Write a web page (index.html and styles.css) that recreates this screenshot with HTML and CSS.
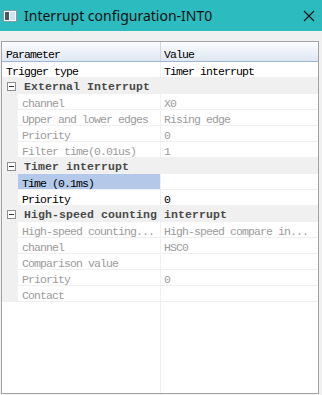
FILE: index.html
```html
<!DOCTYPE html>
<html>
<head>
<meta charset="utf-8">
<title>Interrupt configuration-INT0</title>
<link rel="stylesheet" href="styles.css">
</head>
<body>
<div class="titlebar">
  <svg class="app-icon" width="14" height="12" viewBox="0 0 14 12">
    <rect x="0.5" y="0.5" width="13" height="11" fill="#f4f8fb" stroke="#8c9aa6"/>
    <rect x="2" y="2" width="4" height="8" fill="#4a5560"/>
    <rect x="7" y="2" width="5" height="8" fill="#cfe3f2"/>
  </svg>
  <span class="title">Interrupt configuration-INT0</span>
  <svg class="close" width="12" height="12" viewBox="0 0 12 12">
    <path d="M1 1 L11 11 M11 1 L1 11" stroke="#111" stroke-width="1.2"/>
  </svg>
</div>

<div class="grid">
  <div class="head">
    <div class="name">Parameter</div>
    <div class="value">Value</div>
  </div>

  <div class="row top">
    <div class="name">Trigger type</div>
    <div class="value">Timer interrupt</div>
  </div>

  <div class="cat"><span class="toggle"></span>External Interrupt</div>
  <div class="row off"><div class="gutter"></div><div class="name">channel</div><div class="value">X0</div></div>
  <div class="row off"><div class="gutter"></div><div class="name">Upper and lower edges</div><div class="value">Rising edge</div></div>
  <div class="row off"><div class="gutter"></div><div class="name">Priority</div><div class="value">0</div></div>
  <div class="row off"><div class="gutter"></div><div class="name">Filter time(0.01us)</div><div class="value">1</div></div>

  <div class="cat"><span class="toggle"></span>Timer interrupt</div>
  <div class="row"><div class="gutter"></div><div class="name selected">Time (0.1ms)</div><div class="value"></div></div>
  <div class="row"><div class="gutter"></div><div class="name">Priority</div><div class="value">0</div></div>

  <div class="cat"><span class="toggle"></span>High-speed counting interrupt</div>
  <div class="row off"><div class="gutter"></div><div class="name">High-speed counting...</div><div class="value">High-speed compare in...</div></div>
  <div class="row off"><div class="gutter"></div><div class="name">channel</div><div class="value">HSC0</div></div>
  <div class="row off"><div class="gutter"></div><div class="name">Comparison value</div><div class="value"></div></div>
  <div class="row off"><div class="gutter"></div><div class="name">Priority</div><div class="value">0</div></div>
  <div class="row off"><div class="gutter"></div><div class="name">Contact</div><div class="value"></div></div>

  <div class="filler"><div class="name"></div><div class="value"></div></div>
</div>
</body>
</html>
```

FILE: styles.css
```css
/** WINDOW **/
html, body {
  margin: 0;
  padding: 0;
}

body {
  width: 322px;
  height: 395px;
  background: #f0f0f0;
  overflow: hidden;
  font-family: "Liberation Mono", "Noto Sans CJK SC", monospace;
}

.titlebar {
  height: 31px;
  background: #2cbbbe;
  display: flex;
  align-items: center;
  padding-left: 3px;
}

.app-icon {
  margin-top: 1px;
}

.title {
  margin-left: 7px;
  font-family: "Noto Sans", sans-serif;
  font-size: 14px;
  color: #111;
}

.close {
  margin-left: auto;
  margin-right: 7px;
}

/** PROPERTY GRID **/
.grid {
  margin: 10px 0 0 1px;
  width: 316px;
  height: 351px;
  border: 1px solid #a3a3a3;
  background: #fff;
  display: flex;
  flex-direction: column;
  font-size: 11.5px;
  letter-spacing: -0.9px;
  color: #000;
}

.head {
  display: flex;
  height: 19px;
  border-bottom: 1px solid #9fb6d4;
  background: linear-gradient(#fbfcfe, #dfe7f2);
  line-height: 19px;
}

.head .name {
  width: 154px;
  padding: 3px 0 0 4px;
  border-right: 1px solid #cdd7e3;
}

.head .value {
  padding: 3px 0 0 3px;
}

.row {
  display: flex;
  height: 16px;
  line-height: 15px;
}

.row .gutter {
  width: 16px;
  background: #f0f0f0;
}

.row .name,
.row .value {
  padding-top: 2px;
  height: 13px;
  border-bottom: 1px solid #f0f0f0;
  white-space: nowrap;
  overflow: hidden;
}

.row .name {
  width: 138px;
  padding-left: 4px;
  border-right: 1px solid #f0f0f0;
}

.row .value {
  flex: 1;
  padding-left: 3px;
}

.row.top .name {
  width: 154px;
}

.row.off {
  color: #9c9c9c;
}

.name.selected {
  background: #b4c9ea;
}

/* category rows */
.cat {
  display: flex;
  align-items: center;
  height: 15px;
  padding-top: 1px;
  background: #f0f0f0;
  font-weight: bold;
  letter-spacing: 0.1px;
  color: #4a4a4a;
  white-space: nowrap;
}

.toggle {
  position: relative;
  width: 7px;
  height: 7px;
  margin: -1px 8px 0 5px;
  border: 1px solid #8e8f8f;
  background: #fff;
}

.toggle::after {
  content: "";
  position: absolute;
  left: 1px;
  top: 3px;
  width: 5px;
  height: 1px;
  background: #333;
}

.filler {
  flex: 1;
  display: flex;
}

.filler .name {
  width: 158px;
  border-right: 1px solid #f0f0f0;
}
```
